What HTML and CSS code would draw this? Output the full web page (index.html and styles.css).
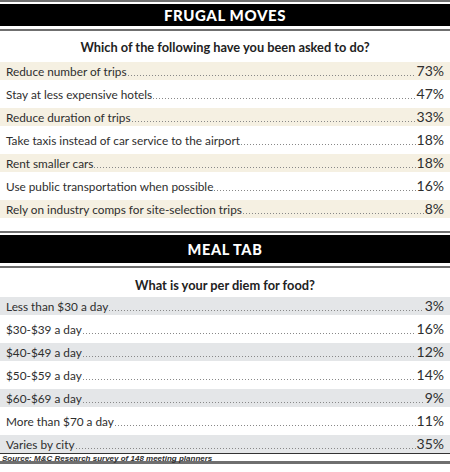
FILE: index.html
```html
<!DOCTYPE html>
<html lang="en">
<head>
    <meta charset="UTF-8">
    <title>Frugal Moves / Meal Tab</title>
    <link rel="stylesheet" href="styles.css">
</head>
<body>
    <section class="chart frugal">
        <div class="chart-head"><h2>FRUGAL MOVES</h2></div>
        <p class="question">Which of the following have you been asked to do?</p>
        <ul class="rows">
            <li><span class="label">Reduce number of trips</span><span class="dots"></span><span class="pct">73%</span></li>
            <li><span class="label">Stay at less expensive hotels</span><span class="dots"></span><span class="pct">47%</span></li>
            <li><span class="label">Reduce duration of trips</span><span class="dots"></span><span class="pct">33%</span></li>
            <li><span class="label">Take taxis instead of car service to the airport</span><span class="dots"></span><span class="pct">18%</span></li>
            <li><span class="label">Rent smaller cars</span><span class="dots"></span><span class="pct">18%</span></li>
            <li><span class="label">Use public transportation when possible</span><span class="dots"></span><span class="pct">16%</span></li>
            <li><span class="label">Rely on industry comps for site-selection trips</span><span class="dots"></span><span class="pct">8%</span></li>
        </ul>
    </section>

    <section class="chart meal">
        <div class="chart-head"><h2>MEAL TAB</h2></div>
        <p class="question">What is your per diem for food?</p>
        <ul class="rows">
            <li><span class="label">Less than $30 a day</span><span class="dots"></span><span class="pct">3%</span></li>
            <li><span class="label">$30-$39 a day</span><span class="dots"></span><span class="pct">16%</span></li>
            <li><span class="label">$40-$49 a day</span><span class="dots"></span><span class="pct">12%</span></li>
            <li><span class="label">$50-$59 a day</span><span class="dots"></span><span class="pct">14%</span></li>
            <li><span class="label">$60-$69 a day</span><span class="dots"></span><span class="pct">9%</span></li>
            <li><span class="label">More than $70 a day</span><span class="dots"></span><span class="pct">11%</span></li>
            <li><span class="label">Varies by city</span><span class="dots"></span><span class="pct">35%</span></li>
        </ul>
        <p class="source">Source: M&amp;C Research survey of 148 meeting planners</p>
    </section>
</body>
</html>
```

FILE: styles.css
```css
:root {
    --rule: #6f6f6f;
    --beige: #f5f0e2;
    --gray: #e4e6e8;
    --text: #2e2e2e;
}
* {
    margin: 0;
    padding: 0;
    box-sizing: border-box;
}
body {
    width: 450px;
    background: #fff;
    color: var(--text);
    font-family: Lato, "Open Sans", sans-serif;
}
.chart-head {
    border-top: 2px solid var(--rule);
    border-bottom: 2px solid var(--rule);
    padding: 2px 0 3px;
}
.chart-head h2 {
    background: #000;
    color: #fff;
    height: 22px;
    line-height: 23px;
    text-align: center;
    font-size: 15px;
    font-weight: 900;
    letter-spacing: 0.6px;
}
.meal .chart-head {
    margin-top: 13px;
}
.meal .chart-head h2 {
    height: 28px;
    line-height: 29px;
    font-size: 14.5px;
}
.question {
    text-align: center;
    font-size: 12.8px;
    font-weight: 700;
    color: #222;
    padding: 8px 0 0;
    height: 31px;
}
.meal .question {
    height: 29px;
    padding-top: 9px;
}
.rows {
    list-style: none;
}
.rows li {
    display: flex;
    align-items: baseline;
    height: 18px;
    line-height: 18px;
    margin-bottom: 5px;
    padding: 0 6px;
    font-size: 11.8px;
}
.frugal .rows li:nth-child(odd) {
    background: var(--beige);
}
.meal .rows li:nth-child(odd) {
    background: var(--gray);
}
.dots {
    flex: 1;
    height: 1px;
    margin: 0 1px;
    background-image: linear-gradient(to right, #888 1px, transparent 1px);
    background-size: 3px 1px;
    background-repeat: repeat-x;
}
.pct {
    font-size: 14px;
}
.meal .rows li:last-child {
    margin-bottom: 0;
}
.source {
    border-top: 1px solid #333;
    border-bottom: 3px solid var(--rule);
    font-family: "Liberation Sans", Arial, sans-serif;
    font-weight: 700;
    font-style: italic;
    font-size: 8px;
    padding: 1px 2px 0;
    height: 11px;
    line-height: 8px;
}
```
